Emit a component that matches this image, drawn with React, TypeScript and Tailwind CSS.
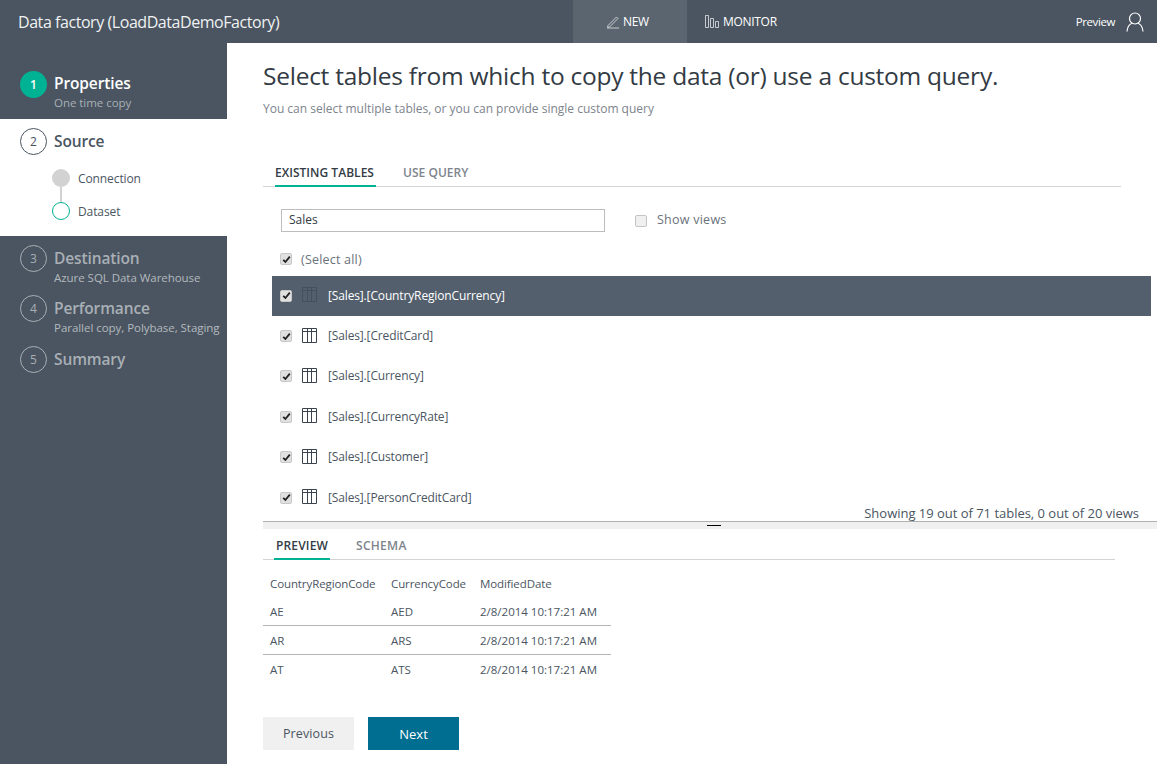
import { useState } from 'react';

const tables = ['CountryRegionCurrency', 'CreditCard', 'Currency', 'CurrencyRate', 'Customer', 'PersonCreditCard'];

const previewRows = [
  ['AE', 'AED', '2/8/2014 10:17:21 AM'],
  ['AR', 'ARS', '2/8/2014 10:17:21 AM'],
  ['AT', 'ATS', '2/8/2014 10:17:21 AM'],
];

function StepCircle({ n, className }: { n: number; className: string }) {
  return (
    <div className={`w-[27px] h-[27px] rounded-full flex items-center justify-center text-[12px] shrink-0 ${className}`}>
      {n}
    </div>
  );
}

function Step({ n, title, sub, h }: { n: number; title: string; sub?: string; h: string }) {
  return (
    <div className={`flex pl-5 gap-[7px] ${h}`}>
      <StepCircle n={n} className="border border-[#a9afb5] text-[#a9afb5]" />
      <div className="pt-[3px]">
        <div className="text-[15.5px] leading-[20px] font-semibold text-[#a9afb5] tracking-[-0.12px]">{title}</div>
        {sub && <div className="text-[11.5px] leading-[16px] mt-[2px] text-[#b4b9be] tracking-[-0.04px] whitespace-nowrap">{sub}</div>}
      </div>
    </div>
  );
}

function Check() {
  return (
    <span className="w-[12px] h-[12px] rounded-[2px] bg-[#e0e0e0] border border-[#c8c8c8] flex items-center justify-center shrink-0">
      <svg width="9" height="9" viewBox="0 0 9 9" fill="none">
        <path d="M1.2 4.8 L3.4 7 L7.8 1.6" stroke="#222" strokeWidth="1.8" />
      </svg>
    </span>
  );
}

function TableIcon({ color }: { color: string }) {
  return (
    <svg width="15" height="15" viewBox="0 0 15 15" fill="none" stroke={color} className="shrink-0">
      <path d="M0.5 0.5H14.5V14.5H0.5ZM0.5 3.5H14.5M5.5 0.5V14.5M9.5 0.5V14.5" />
    </svg>
  );
}

export default function App() {
  const [tab] = useState('existing');

  return (
    <div className="w-[1157px] h-[764px] overflow-hidden bg-white flex flex-col font-['Open_Sans','Noto_Sans',sans-serif] text-[#4a5561]">
      {/* Top bar */}
      <header className="h-[43px] bg-[#4a5561] flex items-center text-white shrink-0">
        <div className="w-[573px] pl-[18px] text-[16px] tracking-[-0.44px] text-[#f0f1f2]">Data factory (LoadDataDemoFactory)</div>
        <div className="w-[114px] h-full bg-[#5b6570] flex items-center pl-[33px] gap-[3px] text-[12px] tracking-[-0.4px]">
          <svg width="14" height="14" viewBox="0 0 14 14" fill="none" stroke="#d5d8db" strokeWidth="0.9">
            <path d="M1 13H13M2 10.5L10.5 2L12 3.5L3.5 12L1.6 12.4Z" />
          </svg>
          NEW
        </div>
        <div className="pl-[18px] flex items-center gap-[4px] text-[12px] tracking-[-0.3px]">
          <svg width="14" height="13" viewBox="0 0 14 13" fill="none" stroke="#d5d8db" strokeWidth="0.9">
            <path d="M0.5 0.5H3.5V12.5H0.5ZM5.5 3.5H8.5V12.5H5.5ZM10.5 6.5H13.5V12.5H10.5Z" />
          </svg>
          MONITOR
        </div>
        <div className="ml-auto flex items-center pr-[13px] gap-[11px]">
          <span className="text-[11.5px] tracking-[-0.4px]">Preview</span>
          <svg width="18" height="20" viewBox="0 0 18 20" fill="none" stroke="#fff" strokeWidth="1.2">
            <circle cx="9" cy="6.5" r="5.5" />
            <path d="M1 19.5C1.5 14.5 4 12 6 11.3M17 19.5C16.5 14.5 14 12 12 11.3" />
          </svg>
        </div>
      </header>

      <div className="flex flex-1 min-h-0">
        {/* Sidebar */}
        <aside className="w-[227px] bg-[#4a5561] shrink-0 flex flex-col">
          <div className="flex pl-5 gap-[7px] pt-[28px] h-[76px]">
            <StepCircle n={1} className="bg-[#00b294] text-white font-semibold" />
            <div className="pt-[2px]">
              <div className="text-[15.5px] leading-[20px] font-semibold text-white tracking-[-0.12px]">Properties</div>
              <div className="text-[11.5px] leading-[16px] mt-[2px] text-[#a9afb5] tracking-[-0.04px]">One time copy</div>
            </div>
          </div>
          <div className="bg-white h-[117px] pt-[9px]">
            <div className="flex pl-5 gap-[7px] items-center">
              <StepCircle n={2} className="border border-[#4a5561] text-[#4a5561]" />
              <div className="text-[15.5px] font-semibold text-[#4a5561] tracking-[-0.12px]">Source</div>
            </div>
            <div className="pl-[52px] mt-[14px] flex gap-[8px]">
              <div className="flex flex-col items-center w-[18px]">
                <div className="w-[18px] h-[18px] rounded-full bg-[#d2d2d2]" />
                <div className="w-[2px] h-[15px] bg-[#d2d2d2]" />
                <div className="w-[18px] h-[18px] rounded-full border border-[#00b294]" />
              </div>
              <div className="text-[12px] tracking-[-0.1px] text-[#4a5561] pt-px">
                <div className="leading-[18px]">Connection</div>
                <div className="leading-[18px] mt-[15px]">Dataset</div>
              </div>
            </div>
          </div>
          <div className="pt-[9px]">
            <Step n={3} title="Destination" sub="Azure SQL Data Warehouse" h="h-[50px]" />
            <Step n={4} title="Performance" sub="Parallel copy, Polybase, Staging" h="h-[51px]" />
            <Step n={5} title="Summary" h="h-[30px]" />
          </div>
        </aside>

        {/* Main */}
        <main className="flex-1 min-w-0 pl-9">
          <h1 className="text-[24.5px] leading-[34px] mt-[16px] text-[#333b44] tracking-[-0.25px]">
            Select tables from which to copy the data (or) use a custom query.
          </h1>
          <p className="text-[12px] leading-[18px] mt-[7px] text-[#7d848c] tracking-[-0.01px]">
            You can select multiple tables, or you can provide single custom query
          </p>

          <div className="mt-[41px] w-[858px] h-[28px] border-b border-[#d4d4d4] flex text-[12px] font-semibold">
            <div className={`ml-[12px] pt-[5px] h-[28px] w-[101px] tracking-[0.03px] border-b-2 border-[#00b294] ${tab === 'existing' ? 'text-[#333b44]' : ''}`}>EXISTING TABLES</div>
            <div className="ml-[27px] pt-[5px] text-[#7d848c] tracking-[0.03px]">USE QUERY</div>
          </div>

          <div className="flex items-center mt-[22px] ml-[18px]">
            <div className="w-[324px] h-[23px] border border-[#bdbdbd] pl-[7px] text-[12px] leading-[20px] text-[#333b44]">Sales</div>
            <span className="ml-[30px] w-[12px] h-[12px] bg-[#f0f0f0] border border-[#c4c4c4] rounded-[2px]" />
            <span className="ml-[10px] text-[12.5px] text-[#6a727b] tracking-[0.25px]">Show views</span>
          </div>

          <div className="flex items-center ml-[17px] mt-[17px] h-[20px] gap-[9px] text-[12.5px] text-[#6a727b] tracking-[0.2px]">
            <Check />
            <span className="mt-[2px]">(Select all)</span>
          </div>

          <div className="ml-[9px] mt-[7px] w-[879px]">
            {tables.map((t, i) => (
              <div
                key={t}
                className={`h-[40.4px] flex items-center pl-[8px] text-[12px] tracking-[-0.14px] ${i === 0 ? 'bg-[#545f6d] text-white' : 'text-[#4a5561]'}`}
              >
                <span className="-mt-px"><Check /></span>
                <span className="ml-[10px] -mt-[3px]"><TableIcon color={i === 0 ? '#46505c' : '#3b444e'} /></span>
                <span className="ml-[11px] -mt-px">[Sales].[{t}]</span>
              </div>
            ))}
          </div>

          <div className="relative h-0 w-[876px]">
            <div className="absolute right-0 -top-[15px] text-[13px] leading-[20px] tracking-[-0.02px] text-[#4a5561] whitespace-nowrap">
              Showing 19 out of 71 tables, 0 out of 20 views
            </div>
          </div>

          {/* Splitter */}
          <div className="mt-[3px] h-[8px] bg-[#f0f0f0] border-t border-[#b0b0b0] flex justify-end pr-[436px]">
            <div className="w-[14px] h-px bg-black mt-[3px]" />
          </div>

          <div className="mt-[2px] w-[852px] h-[29px] border-b border-[#d4d4d4] flex text-[12px] font-semibold">
            <div className="ml-[11px] pt-[6px] w-[56px] text-center h-[29px] tracking-[0.15px] border-b-2 border-[#00b294] text-[#333b44]">PREVIEW</div>
            <div className="ml-[26px] pt-[6px] text-[#7d848c] tracking-[0.3px]">SCHEMA</div>
          </div>

          <div className="w-[348px] mt-[9px] text-[11.5px] text-[#4a5561]">
            <div className="flex h-[29px] items-center pl-[7px] tracking-[-0.1px]">
              <span className="w-[121px]">CountryRegionCode</span>
              <span className="w-[89px]">CurrencyCode</span>
              <span>ModifiedDate</span>
            </div>
            {previewRows.map((r, i) => (
              <div key={r[0]} className={`flex h-[29px] items-center pl-[7px] -translate-y-px ${i < 2 ? 'border-b border-[#b5b5b5]' : ''}`}>
                <span className="w-[121px]">{r[0]}</span>
                <span className="w-[89px]">{r[1]}</span>
                <span>{r[2]}</span>
              </div>
            ))}
          </div>

          <div className="flex gap-[14px] mt-[32px]">
            <button className="w-[91px] h-[33px] pt-[2px] bg-[#f0f0f0] text-[12.5px] tracking-[0.1px] text-[#4a5561]">Previous</button>
            <button className="w-[91px] h-[33px] pt-px bg-[#006e91] text-[13px] text-white">Next</button>
          </div>
        </main>
      </div>
    </div>
  );
}
